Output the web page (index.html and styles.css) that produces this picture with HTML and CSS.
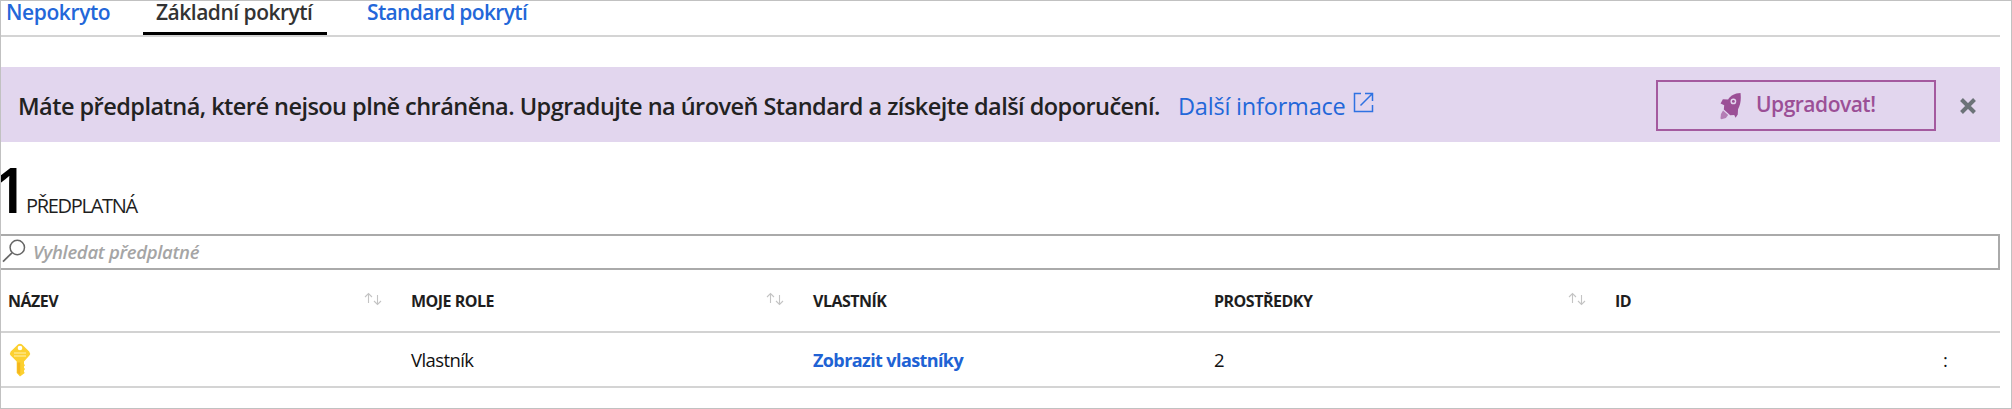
FILE: index.html
```html
<!DOCTYPE html>
<html lang="cs">
<head>
<meta charset="utf-8">
<title>Pokrytí</title>
<link rel="stylesheet" href="styles.css">
</head>
<body>
<svg class="sprite" width="0" height="0">
  <symbol id="sort" viewBox="0 0 18 14">
    <path d="M4.500 11V1.500M1 5l3.500-3.500L8 5M13.500 3v9.500M10 9l3.500 3.500L17 9" fill="none" stroke="currentColor" stroke-width="1.100"/>
  </symbol>
</svg>
<main class="page">
  <nav class="tabs">
    <a class="tab tab-none">Nepokryto</a>
    <a class="tab tab-basic active">Základní pokrytí</a>
    <a class="tab tab-standard">Standard pokrytí</a>
  </nav>
  <section class="banner">
    <p class="message">Máte předplatná, které nejsou plně chráněna. Upgradujte na úroveň Standard a získejte další doporučení.</p>
    <a class="more">Další informace</a>
    <svg class="external" viewBox="0 0 21 21"><path d="M8 1.500H1.500v18h18V13M12 1.500h7.500V9M19.500 1.500L7.500 13.500" fill="none" stroke="currentColor" stroke-width="1.500"/></svg>
    <button class="upgrade">
      <svg class="rocket" viewBox="0 0 22 28">
        <path d="M21.500.5C15 .6 11 3.500 8.500 7.200L3 6.800.6 11.500l3.800 1.700-.4 4.500 6.700 6 4.200-.4 1.400 2.900 2.300-3.200.3-5.500C21.500 12.500 22.300 7 21.500.5Z" fill="#9b4f96"/>
        <circle cx="14" cy="9.200" r="3" fill="#e3d6ee"/><circle cx="14" cy="9.200" r="1.500" fill="#9b4f96"/>
        <path d="M3.200 18.800l5.300 4.600-2.300 3.200-4.700 1.200-1-.8.5-4.500Z" fill="#9b4f96" opacity=".65"/>
      </svg>
      <span>Upgradovat!</span>
    </button>
    <svg class="close" viewBox="0 0 18 18"><path d="M2.500 2.500l13 13M15.500 2.500l-13 13" stroke="currentColor" stroke-width="4"/></svg>
  </section>
  <header class="summary"><span class="count">1</span><span class="label">PŘEDPLATNÁ</span></header>
  <div class="search">
    <svg class="lens" viewBox="0 0 24 24"><circle cx="15.300" cy="8.500" r="7.200" fill="none" stroke="currentColor" stroke-width="1.500"/><path d="M10 13.800L1 22.600" stroke="currentColor" stroke-width="1.700"/></svg>
    <span class="placeholder">Vyhledat předplatné</span>
  </div>
  <div class="row head">
    <div class="cell">NÁZEV<svg class="sort"><use href="#sort"/></svg></div>
    <div class="cell">MOJE ROLE<svg class="sort"><use href="#sort"/></svg></div>
    <div class="cell">VLASTNÍK</div>
    <div class="cell">PROSTŘEDKY<svg class="sort"><use href="#sort"/></svg></div>
    <div class="cell">ID</div>
  </div>
  <div class="row data">
    <div class="cell"><svg class="key" viewBox="0 0 22 34">
      <path d="M9.200 1.300Q11 0 12.800 1.300L20.200 8.500Q21.800 10.500 20.400 12.500L15 18.500V21l1 1.200-1 1.400v1.200l1 1.300-1 1.400v1.200l.7 1.200L11 33.500 7.700 30V18.500L1.700 12.500Q.2 10.500 1.700 8.500Z" fill="#fcd030"/>
      <path d="M8.200 19.500h3v12.300l-3-2.300Z" fill="#f5b61c"/>
      <circle cx="11" cy="5" r="2.300" fill="#fff"/>
      <path d="M5 10h12M5 13h12" stroke="#fff0ae" stroke-width="1.200"/>
    </svg></div>
    <div class="cell">Vlastník</div>
    <div class="cell"><a class="owners">Zobrazit vlastníky</a></div>
    <div class="cell">2</div>
    <div class="cell last"><span>:</span></div>
  </div>
</main>
</body>
</html>
```

FILE: styles.css
```css
* { box-sizing: border-box; }
body { margin: 0; background: #fff; color: #1e1e1e; font-family: "Open Sans", "Noto Sans", sans-serif; }
.sprite { display: block; height: 0; }
.page { width: 2012px; height: 409px; border: 1px solid #c1c1c1; padding-right: 11px; overflow: hidden; }
.tabs { display: flex; height: 36px; border-bottom: 2px solid #d4d4d4; padding-left: 5px; font-size: 21px; font-weight: 600; line-height: 23px; color: #2367d9; white-space: nowrap; }
.tab { height: 34px; }
.tab-none { width: 137px; letter-spacing: -.4px; }
.tab-basic { width: 184px; padding-left: 13px; border-bottom: 3px solid #000; letter-spacing: -.5px; color: #333; }
.tab-standard { padding-left: 40px; letter-spacing: -.65px; }
.banner { display: flex; align-items: center; height: 75px; margin-top: 30px; padding: 0 23px 0 17px; background: #e2d6ee; white-space: nowrap; }
.message { margin: 2px 0 0; width: 1160px; font-size: 23.500px; line-height: 32px; font-weight: 600; letter-spacing: -.54px; color: #222; }
.more { width: 175px; margin-top: 2px; font-size: 23.500px; line-height: 32px; letter-spacing: -.2px; color: #2367d9; }
.external { width: 21px; height: 21px; margin-top: -4px; color: #2e72e2; }
.upgrade { display: flex; align-items: center; width: 280px; height: 51px; margin: 2px 0 0 auto; padding: 0 0 0 62px; gap: 15px; border: 2px solid #a45a9f; background: none; font: 600 21px "Open Sans", "Noto Sans", sans-serif; letter-spacing: -.5px; color: #9b4f96; }
.upgrade span { margin-top: -4px; }
.rocket { width: 21px; height: 28px; }
.close { width: 18px; height: 18px; margin: 3px 0 0 23px; color: #6c7378; }
.summary { display: flex; align-items: baseline; height: 92px; padding-top: 15px; line-height: 64px; white-space: nowrap; }
.count { width: 25px; margin-left: -9px; font-size: 64px; font-weight: 600; color: #000; }
.label { margin-left: 9px; font-size: 20px; letter-spacing: -1.3px; }
.search { display: flex; align-items: center; height: 36px; margin-left: -2px; border: 2px solid #aaa; color: #666; }
.lens { width: 24px; height: 24px; margin: -2px 7px 0 1px; }
.placeholder { margin-top: -2px; font-size: 18.500px; font-style: italic; font-weight: 600; color: #a5a5a5; white-space: nowrap; letter-spacing: -.3px; }
.row { display: grid; grid-template-columns: 403px 402px 401px 401px 1fr; padding-left: 7px; }
.cell { display: flex; align-items: center; white-space: nowrap; }
.head { height: 63px; border-bottom: 2px solid #d2d2d2; font-size: 16px; font-weight: 700; letter-spacing: -.5px; }
.sort { width: 18px; height: 14px; margin: -4px 29px 0 auto; color: #c4c4c4; }
.data { height: 55px; border-bottom: 2px solid #d4d4d4; font-size: 18.500px; letter-spacing: -.6px; color: #111; }
.key { width: 22px; height: 34px; margin-left: 1px; }
.owners { font-size: 18px; font-weight: 700; letter-spacing: -.6px; color: #2062d4; }
.last { padding-left: 328px; }
```
